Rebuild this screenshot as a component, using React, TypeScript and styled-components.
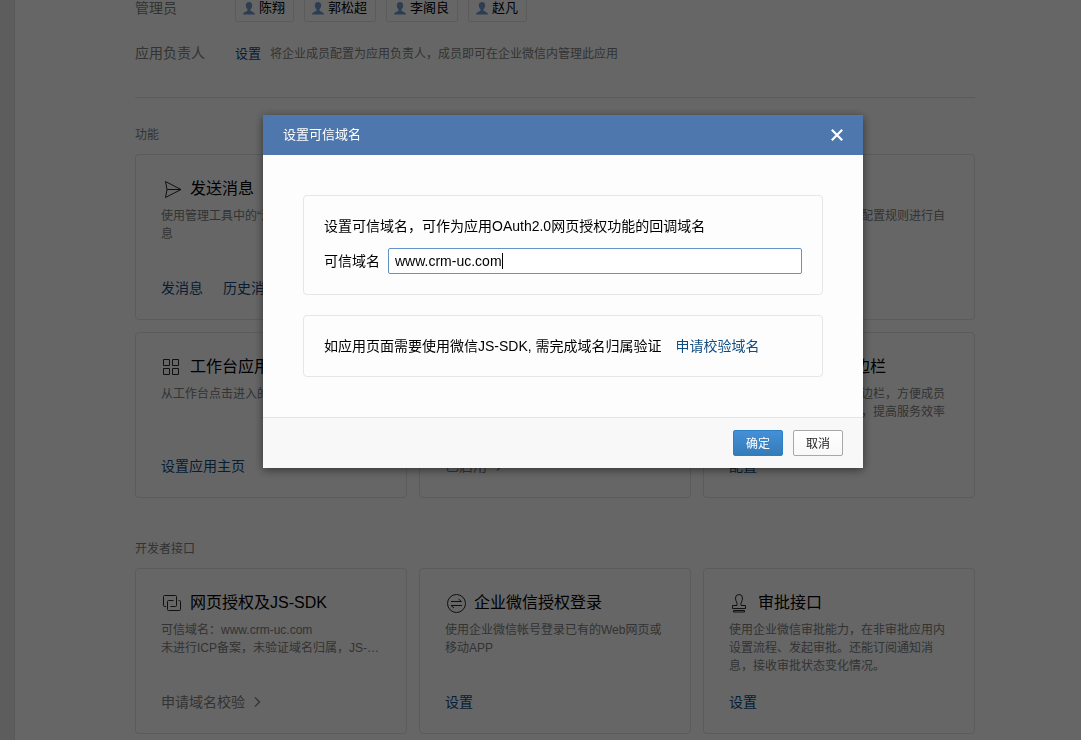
import React, { useState } from "react";
import styled, { createGlobalStyle } from "styled-components";

const colors = {
  text: "#000",
  muted: "#808080",
  link: "#0f4c81",
  line: "#e4e4e4",
};

const GlobalStyle = createGlobalStyle`
  * { box-sizing: border-box; }
  body {
    margin: 0;
    background: #e9e9e9;
    color: ${colors.text};
    font: 14px/20px "Liberation Sans", "Noto Sans CJK SC", sans-serif;
    overflow: hidden;
  }
  a { color: ${colors.link}; text-decoration: none; }
  h2, h3, p { margin: 0; font-weight: normal; }
`;

const Sheet = styled.main`
  min-height: 100vh;
  margin-left: 14px;
  padding: 0 106px 0 120px;
  background: #fff;
  border-left: 1px solid #dcdcdc;
`;

const Settings = styled.section`
  display: flex;
  flex-direction: column;
  gap: 21px;
  padding-bottom: 34px;
  border-bottom: 1px solid ${colors.line};
`;

const SettingRow = styled.div<{ $clipped?: boolean }>`
  display: flex;
  align-items: ${(p) => (p.$clipped ? "flex-end" : "baseline")};
  height: ${(p) => (p.$clipped ? "22px" : "20px")};
  overflow: hidden;
`;

const SettingLabel = styled.span<{ $tall?: boolean }>`
  flex: 0 0 100px;
  line-height: ${(p) => (p.$tall ? "28px" : "20px")};
  color: ${colors.muted};
`;

const Chips = styled.div`
  display: flex;
  gap: 10px;
`;

const Chip = styled.span`
  display: flex;
  align-items: center;
  gap: 4px;
  height: 28px;
  padding: 0 8px 0 7px;
  border: 1px solid ${colors.line};
  border-radius: 2px;
  font-size: 13px;
`;

const SmallLink = styled.a`
  font-size: 13px;
`;

const Hint = styled.span`
  margin-left: 9px;
  font-size: 12px;
  color: ${colors.muted};
`;

const Group = styled.section<{ $first?: boolean }>`
  margin-top: ${(p) => (p.$first ? "27px" : "41px")};
`;

const GroupTitle = styled.h2`
  margin-bottom: 9px;
  font-size: 12px;
  line-height: 20px;
  color: ${colors.muted};
`;

const Cards = styled.div`
  display: grid;
  grid-template-columns: repeat(3, minmax(0, 1fr));
  grid-auto-rows: 166px;
  gap: 12px;
`;

const CardBox = styled.article`
  display: flex;
  flex-direction: column;
  padding: 22px 25px 21px;
  border: 1px solid ${colors.line};
  border-radius: 4px;
`;

const CardHead = styled.div`
  display: flex;
  align-items: center;
  gap: 8px;
  height: 24px;
  margin-bottom: 6px;
  padding-left: 1px;
`;

const CardTitle = styled.h3`
  font-size: 16px;
  line-height: 24px;
`;

const CardText = styled.p`
  font-size: 12px;
  line-height: 18px;
  color: ${colors.muted};
`;

const Line = styled.span`
  display: block;
  white-space: nowrap;
`;

const CardActions = styled.div`
  display: flex;
  gap: 20px;
  margin-top: auto;
`;

const MutedLink = styled.a`
  display: flex;
  align-items: center;
  gap: 8px;
  color: ${colors.muted};
`;

const Overlay = styled.div`
  position: fixed;
  inset: 0;
  display: flex;
  justify-content: center;
  align-items: flex-start;
  padding: 115px 0 0 45px;
  background: rgba(0, 0, 0, 0.6);
`;

const Dialog = styled.form`
  width: 600px;
  max-width: 100%;
  background: #fdfdfd;
  border-radius: 1px;
  box-shadow: 0 2px 10px rgba(0, 0, 0, 0.5);
`;

const DialogHead = styled.header`
  display: flex;
  align-items: center;
  justify-content: space-between;
  height: 40px;
  padding: 0 20px;
  background: #4e78ad;
  color: #fff;
`;

const DialogTitle = styled.h2`
  font-size: 13px;
  line-height: 20px;
`;

const CloseButton = styled.button`
  display: flex;
  padding: 0;
  border: 0;
  background: none;
  color: #fff;
  cursor: pointer;
`;

const DialogBody = styled.div`
  display: flex;
  flex-direction: column;
  gap: 20px;
  padding: 40px;
`;

const Panel = styled.section`
  padding: 20px;
  border: 1px solid #e4e6e9;
  border-radius: 4px;
`;

const Field = styled.div`
  display: flex;
  align-items: center;
  gap: 8px;
  margin-top: 12px;
`;

const InputWrap = styled.div`
  position: relative;
  flex: 1;
  display: flex;
`;

const Input = styled.input`
  width: 100%;
  height: 26px;
  padding: 0 6px;
  border: 1px solid #6394c8;
  border-radius: 2px;
  outline: 0;
  background: #fff;
  color: ${colors.text};
  font: inherit;
  caret-color: transparent;
`;

const Caret = styled.span`
  position: absolute;
  top: 5px;
  left: 114px;
  width: 1px;
  height: 16px;
  background: #000;
`;

const InlineLink = styled.a`
  margin-left: 14px;
`;

const DialogFoot = styled.footer`
  display: flex;
  align-items: center;
  justify-content: flex-end;
  gap: 10px;
  height: 51px;
  padding: 0 20px;
  border-top: 1px solid #e4e4e4;
  background: #f8f8f8;
`;

const Button = styled.button<{ $primary?: boolean }>`
  width: 50px;
  height: 26px;
  padding: 1px 0 0;
  border: 1px solid ${(p) => (p.$primary ? "#2b7fc4" : "#a8a8a8")};
  border-radius: 2px;
  background: ${(p) =>
    p.$primary
      ? "linear-gradient(#4490d8, #347cb8)"
      : "linear-gradient(#fff, #f8f8f8)"};
  color: ${(p) => (p.$primary ? "#fff" : "#222")};
  font: 12px/18px "Liberation Sans", "Noto Sans CJK SC", sans-serif;
  cursor: pointer;
`;

const iconPaths: Record<string, React.ReactNode> = {
  send: <path d="M3.5 2.5 19 10.5 3.5 18.5 5 10.5ZM5 10.5H19" />,
  grid: (
    <path d="M1.5 2.5h6v6h-6zM10.5 2.5h6v6h-6zM1.5 11.5h6v6h-6zM10.5 11.5h6v6h-6z" />
  ),
  rings: (
    <path d="M4 13.5H2.500a1 1 0 0 1-1-1v-9a1 1 0 0 1 1-1h11a1 1 0 0 1 1 1v9a1 1 0 0 1-1 1h-5M11.500 7.500h-5a1 1 0 0 0-1 1v8a1 1 0 0 0 1 1h11a1 1 0 0 0 1-1v-8a1 1 0 0 0-1-1h-1" />
  ),
  swap: (
    <>
      <circle cx="10.5" cy="10.5" r="9" />
      <path d="M5 8.500h10.500L12.500 6M16 12.500H5l3 2.500" />
    </>
  ),
  stamp: (
    <path d="M2.500 15.500v-3H7c.6-3-1.500-4-1.500-7.500a3.500 3.500 0 0 1 7 0c0 3.500-2.100 4.500-1.500 7.500h4.500v3zM3.500 17.500h11v1.500h-11z" />
  ),
};

function Icon({ name }: { name: string }) {
  return (
    <svg
      width="20"
      height="20"
      viewBox="0 0 20 20"
      fill="none"
      stroke="#2a2a2a"
      strokeWidth="1"
      strokeLinejoin="round"
      aria-hidden="true"
    >
      {iconPaths[name]}
    </svg>
  );
}

function PersonIcon() {
  return (
    <svg width="12" height="13" viewBox="0 0 12 13" fill="#7099cc" aria-hidden="true">
      <path d="M6 0C4 0 2.800 1.300 2.800 3.200c0 1.600.7 3.200 1.700 4v1.300C4 9.800 0 9.800 0 12.500h12c0-2.700-4-2.700-4.500-4V7.200c1-.8 1.700-2.400 1.700-4C9.200 1.300 8 0 6 0Z" />
    </svg>
  );
}

function Chevron() {
  return (
    <svg width="8" height="12" viewBox="0 0 8 12" fill="none" stroke="#8c8c8c" strokeWidth="1.500" aria-hidden="true">
      <path d="M2 1.500 6.500 6 2 10.500" />
    </svg>
  );
}

type CardProps = {
  icon: string;
  title: string;
  text: React.ReactNode;
  links?: string[];
  more?: string;
};

function Card({ icon, title, text, links = [], more }: CardProps) {
  return (
    <CardBox>
      <CardHead>
        <Icon name={icon} />
        <CardTitle>{title}</CardTitle>
      </CardHead>
      <CardText>{text}</CardText>
      <CardActions>
        {links.map((l) => (
          <a href="#" key={l}>
            {l}
          </a>
        ))}
        {more && (
          <MutedLink href="#">
            {more}
            <Chevron />
          </MutedLink>
        )}
      </CardActions>
    </CardBox>
  );
}

const features: CardProps[] = [
  {
    icon: "send",
    title: "发送消息",
    text: "使用管理工具中的“消息群发”功能发送消息",
    links: ["发消息", "历史消息"],
  },
  { icon: "grid", title: "自定义菜单", text: "", links: ["设置"] },
  {
    icon: "swap",
    title: "接收消息",
    text: "在此处设置自动回复，按配置规则进行自动回复",
  },
  {
    icon: "grid",
    title: "工作台应用主页",
    text: "从工作台点击进入的应用主页",
    links: ["设置应用主页"],
  },
  { icon: "rings", title: "应用主页", text: "管理应用的展示", more: "已启用" },
  {
    icon: "rings",
    title: "配置到聊天侧边栏",
    text: "可配置应用页面到聊天侧边栏，方便成员在外部聊天中查看和使用，提高服务效率",
    links: ["配置"],
  },
];

const apis: CardProps[] = [
  {
    icon: "rings",
    title: "网页授权及JS-SDK",
    text: (
      <>
        <Line>可信域名：www.crm-uc.com</Line>
        <Line>未进行ICP备案，未验证域名归属，JS-…</Line>
      </>
    ),
    more: "申请域名校验",
  },
  {
    icon: "swap",
    title: "企业微信授权登录",
    text: "使用企业微信帐号登录已有的Web网页或移动APP",
    links: ["设置"],
  },
  {
    icon: "stamp",
    title: "审批接口",
    text: "使用企业微信审批能力，在非审批应用内设置流程、发起审批。还能订阅通知消息，接收审批状态变化情况。",
    links: ["设置"],
  },
];

export default function App() {
  const [domain, setDomain] = useState("www.crm-uc.com");

  return (
    <>
      <GlobalStyle />
      <Sheet>
        <Settings>
          <SettingRow $clipped>
            <SettingLabel $tall>管理员</SettingLabel>
            <Chips>
              {["陈翔", "郭松超", "李阁良", "赵凡"].map((name) => (
                <Chip key={name}>
                  <PersonIcon />
                  {name}
                </Chip>
              ))}
            </Chips>
          </SettingRow>
          <SettingRow>
            <SettingLabel>应用负责人</SettingLabel>
            <SmallLink href="#">设置</SmallLink>
            <Hint>将企业成员配置为应用负责人，成员即可在企业微信内管理此应用</Hint>
          </SettingRow>
        </Settings>
        <Group $first>
          <GroupTitle>功能</GroupTitle>
          <Cards>
            {features.map((c) => (
              <Card key={c.title} {...c} />
            ))}
          </Cards>
        </Group>
        <Group>
          <GroupTitle>开发者接口</GroupTitle>
          <Cards>
            {apis.map((c) => (
              <Card key={c.title} {...c} />
            ))}
          </Cards>
        </Group>
      </Sheet>
      <Overlay>
        <Dialog
          role="dialog"
          aria-labelledby="dialog-title"
          onSubmit={(e) => e.preventDefault()}
        >
          <DialogHead>
            <DialogTitle id="dialog-title">设置可信域名</DialogTitle>
            <CloseButton type="button" aria-label="关闭">
              <svg width="12" height="12" viewBox="0 0 12 12" fill="none" stroke="currentColor" strokeWidth="2.200">
                <path d="M.8.8l10.400 10.400M11.200.8.8 11.200" />
              </svg>
            </CloseButton>
          </DialogHead>
          <DialogBody>
            <Panel>
              <p>设置可信域名，可作为应用OAuth2.0网页授权功能的回调域名</p>
              <Field>
                <label htmlFor="domain">可信域名</label>
                <InputWrap>
                  <Input
                    id="domain"
                    type="text"
                    value={domain}
                    onChange={(e) => setDomain(e.target.value)}
                  />
                  <Caret />
                </InputWrap>
              </Field>
            </Panel>
            <Panel>
              <p>
                如应用页面需要使用微信JS-SDK, 需完成域名归属验证
                <InlineLink href="#">申请校验域名</InlineLink>
              </p>
            </Panel>
          </DialogBody>
          <DialogFoot>
            <Button type="submit" $primary>
              确定
            </Button>
            <Button type="button">取消</Button>
          </DialogFoot>
        </Dialog>
      </Overlay>
    </>
  );
}
